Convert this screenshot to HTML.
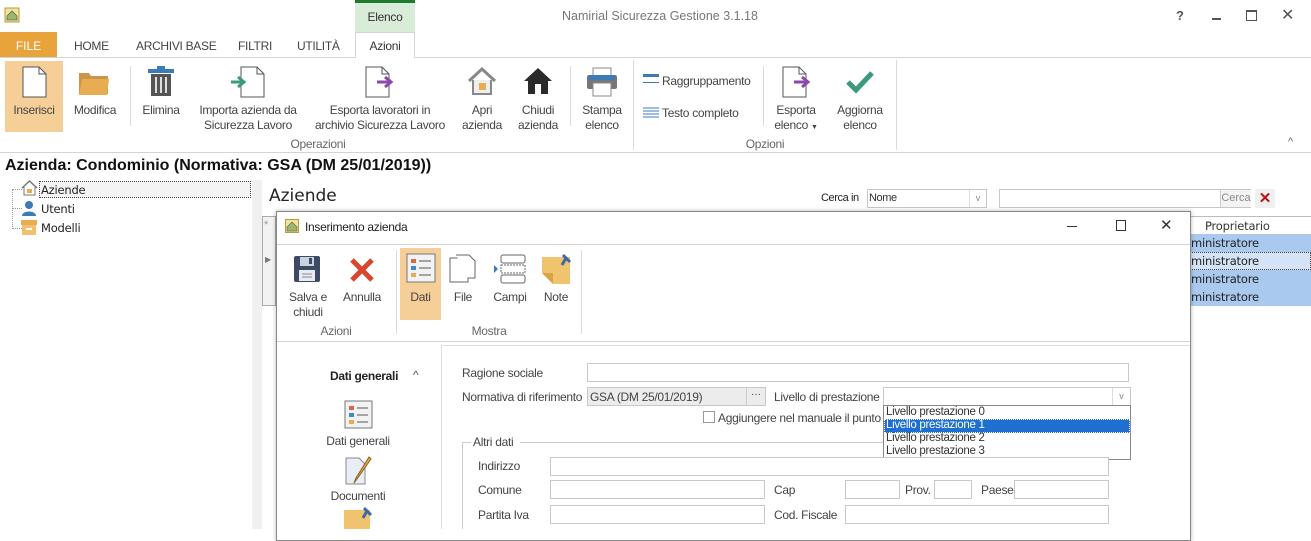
<!DOCTYPE html>
<html><head><meta charset="utf-8">
<style>
*{margin:0;padding:0;box-sizing:border-box}
body{width:1311px;height:529px;overflow:hidden;background:#fff;position:relative;font-family:"Liberation Sans",sans-serif;font-size:12px;color:#333}
.a{position:absolute;white-space:nowrap}
.c{text-align:center}
.n{font-size:12px;letter-spacing:-0.3px;color:#444}
.v{font-family:"DejaVu Sans",sans-serif;font-size:11.5px;color:#222;letter-spacing:-0.2px}
.inp{position:absolute;border:1px solid #c8c8c8;background:#fff}
.sep{position:absolute;width:1px;background:#dadada}
</style></head><body>

<!-- title bar -->
<svg class="a" style="left:4px;top:7px" width="16" height="16"><rect x="1" y="1" width="14" height="14" fill="#f3e49a" stroke="#b89a3a"/><path d="M3 9 L8 4 L13 9 V13 H3Z" fill="#9ab86a" stroke="#666" stroke-width=".8"/></svg>
<div class="a" style="left:355px;top:0;width:60px;height:32px;background:#d8ecd8;border-top:3px solid #1e7a2e"></div>
<div class="a c n" style="left:355px;top:10px;width:60px;color:#333">Elenco</div>
<div class="a c" style="left:540px;top:9px;width:240px;color:#777;font-size:12.5px">Namirial Sicurezza Gestione 3.1.18</div>
<div class="a" style="left:1176px;top:8px;font-size:13px;color:#555;font-weight:bold">?</div>
<div class="a" style="left:1212px;top:18px;width:9px;height:2px;background:#555"></div>
<div class="a" style="left:1246px;top:10px;width:11px;height:11px;border:1px solid #555;border-top-width:2px"></div>
<div class="a" style="left:1281px;top:5px;font-size:16px;color:#555">✕</div>

<!-- tabs -->
<div class="a" style="left:0;top:32px;width:57px;height:25px;background:#e9a33b"></div>
<div class="a c" style="left:0;top:39px;width:57px;color:#fff;font-size:12px">FILE</div>
<div class="a n" style="left:74px;top:39px">HOME</div>
<div class="a n" style="left:136px;top:39px">ARCHIVI BASE</div>
<div class="a n" style="left:238px;top:39px">FILTRI</div>
<div class="a n" style="left:297px;top:39px">UTILITÀ</div>
<div class="a" style="left:0;top:57px;width:1311px;height:1px;background:#d4d4d4"></div>
<div class="a" style="left:355px;top:32px;width:60px;height:26px;background:#fff;border:1px solid #d4d4d4;border-bottom:none"></div>
<div class="a c n" style="left:355px;top:39px;width:60px;color:#333">Azioni</div>

<!-- ribbon -->
<div class="a" style="left:5px;top:61px;width:58px;height:71px;background:#f6cf98"></div>
<svg class="a" style="left:22px;top:66px" width="26" height="32"><path d="M1 1H17L24 8V31H1Z" fill="#fff" stroke="#555"/><path d="M17 1V8H24" fill="none" stroke="#555"/></svg>
<div class="a c n" style="left:5px;top:103px;width:58px">Inserisci</div>
<svg class="a" style="left:78px;top:70px" width="32" height="26"><path d="M1 3H11L13 6H30V24H1Z" fill="#c9964a"/><path d="M4 9H31L29 25H1Z" fill="#e8ac52"/></svg>
<div class="a c n" style="left:66px;top:103px;width:58px">Modifica</div>
<div class="sep" style="left:130px;top:66px;height:60px"></div>
<svg class="a" style="left:147px;top:65px" width="28" height="32"><rect x="1" y="4" width="26" height="4" fill="#3c7ab8"/><rect x="10" y="1" width="8" height="4" fill="#3c7ab8"/><rect x="4" y="9" width="20" height="22" fill="#555"/><path d="M9 12V28M14 12V28M19 12V28" stroke="#ddd" stroke-width="2"/></svg>
<div class="a c n" style="left:135px;top:103px;width:52px">Elimina</div>
<svg class="a" style="left:229px;top:66px" width="36" height="32"><path d="M12 1H28L35 8V31H12Z" fill="#fff" stroke="#555"/><path d="M28 1V8H35" fill="none" stroke="#555"/><path d="M2 16H13M9 11L15 16L9 21" stroke="#3a9a7a" stroke-width="3" fill="none"/></svg>
<div class="a c n" style="left:190px;top:103px;width:116px;line-height:15px">Importa azienda da<br>Sicurezza Lavoro</div>
<svg class="a" style="left:365px;top:66px" width="36" height="32"><path d="M1 1H17L24 8V31H1Z" fill="#fff" stroke="#555"/><path d="M17 1V8H24" fill="none" stroke="#555"/><path d="M12 16H24M20 11L26 16L20 21" stroke="#8a4aa8" stroke-width="3" fill="none"/></svg>
<div class="a c n" style="left:310px;top:103px;width:140px;line-height:15px">Esporta lavoratori in<br>archivio Sicurezza Lavoro</div>
<svg class="a" style="left:467px;top:67px" width="30" height="28"><path d="M2 14L15 2L28 14" fill="none" stroke="#888" stroke-width="3"/><path d="M6 13V27H24V13" fill="#eee" stroke="#888" stroke-width="2"/><rect x="12" y="16" width="7" height="7" fill="#e8ac52"/></svg>
<div class="a c n" style="left:455px;top:103px;width:54px;line-height:15px">Apri<br>azienda</div>
<svg class="a" style="left:523px;top:67px" width="30" height="28"><path d="M1 14L15 1L29 14H25V27H5V14Z" fill="#2a2a2a"/><rect x="12" y="17" width="6" height="10" fill="#fff"/></svg>
<div class="a c n" style="left:511px;top:103px;width:54px;line-height:15px">Chiudi<br>azienda</div>
<div class="sep" style="left:570px;top:66px;height:60px"></div>
<svg class="a" style="left:586px;top:67px" width="32" height="30"><rect x="7" y="1" width="18" height="8" fill="#fff" stroke="#888"/><rect x="1" y="8" width="30" height="14" rx="2" fill="#777"/><rect x="3" y="8" width="26" height="5" fill="#3c7ab8"/><rect x="7" y="16" width="18" height="13" fill="#fff" stroke="#888"/></svg>
<div class="a c n" style="left:574px;top:103px;width:56px;line-height:15px">Stampa<br>elenco</div>
<div class="sep" style="left:633px;top:60px;height:90px"></div>
<div class="a" style="left:643px;top:74px;width:16px;height:9px;border-top:3px solid #3c7ab8;border-bottom:1px solid #3c7ab8"></div>
<div class="a n" style="left:662px;top:74px">Raggruppamento</div>
<svg class="a" style="left:643px;top:107px" width="16" height="12"><path d="M0 1H16M0 4H16M0 7H16M0 10H16" stroke="#3c7ab8"/></svg>
<div class="a n" style="left:662px;top:106px">Testo completo</div>
<div class="sep" style="left:763px;top:66px;height:60px"></div>
<svg class="a" style="left:782px;top:66px" width="30" height="32"><path d="M1 1H17L24 8V31H1Z" fill="#fff" stroke="#555"/><path d="M17 1V8H24" fill="none" stroke="#555"/><path d="M12 16H24M20 11L26 16L20 21" stroke="#8a4aa8" stroke-width="3" fill="none"/></svg>
<div class="a c n" style="left:768px;top:103px;width:56px;line-height:15px">Esporta<br>elenco <span style="font-size:7px">▼</span></div>
<svg class="a" style="left:846px;top:70px" width="28" height="24"><path d="M2 12L10 20L26 3" fill="none" stroke="#3a9a7a" stroke-width="5"/></svg>
<div class="a c n" style="left:830px;top:103px;width:60px;line-height:15px">Aggiorna<br>elenco</div>
<div class="sep" style="left:896px;top:60px;height:90px"></div>
<div class="a c n" style="left:260px;top:137px;width:116px;color:#666">Operazioni</div>
<div class="a c n" style="left:730px;top:137px;width:70px;color:#666">Opzioni</div>
<div class="a" style="left:1288px;top:136px;font-size:11px;color:#666">^</div>
<div class="a" style="left:0;top:152px;width:1311px;height:1px;background:#d4d4d4"></div>

<!-- heading -->
<div class="a" style="left:5px;top:157px;font-family:'Liberation Sans',sans-serif;font-weight:bold;font-size:16px;color:#111">Azienda: Condominio (Normativa: GSA (DM 25/01/2019))</div>

<!-- tree -->
<div class="a" style="left:12px;top:189px;width:1px;height:40px;border-left:1px dotted #999"></div>
<div class="a" style="left:12px;top:189px;width:10px;border-top:1px dotted #999"></div>
<div class="a" style="left:12px;top:208px;width:10px;border-top:1px dotted #999"></div>
<div class="a" style="left:12px;top:228px;width:10px;border-top:1px dotted #999"></div>
<svg class="a" style="left:21px;top:180px" width="17" height="16"><path d="M1 8L8.5 1L16 8" fill="none" stroke="#777" stroke-width="1.5"/><path d="M3 7V15H14V7" fill="#fff" stroke="#777"/><rect x="6" y="9" width="5" height="4" fill="#e8ac52"/></svg>
<div class="a v" style="left:39px;top:181px;width:212px;height:17px;border:1px dotted #444;padding:1px 1px;background:#f4f4f4">Aziende</div>
<svg class="a" style="left:21px;top:200px" width="16" height="16"><circle cx="8" cy="5" r="4" fill="#3c7ab8"/><path d="M1 16C1 10 15 10 15 16Z" fill="#3c7ab8"/></svg>
<div class="a v" style="left:41px;top:202px">Utenti</div>
<svg class="a" style="left:21px;top:219px" width="16" height="16"><rect x="0" y="1" width="16" height="5" fill="#e8ac52"/><rect x="1" y="6" width="14" height="10" fill="#f1c070"/><rect x="5" y="9" width="6" height="2" fill="#fff"/></svg>
<div class="a v" style="left:41px;top:221px">Modelli</div>

<!-- splitter & right pane -->
<div class="a" style="left:252px;top:180px;width:10px;height:349px;background:#f0f0f0"></div>
<div class="a" style="left:269px;top:186px;font-family:'DejaVu Sans',sans-serif;font-size:17px;color:#222">Aziende</div>
<div class="a" style="left:821px;top:192px;font-size:11px;color:#222;letter-spacing:-0.4px">Cerca in</div>
<div class="inp" style="left:867px;top:189px;width:120px;height:19px"></div>
<div class="a" style="left:869px;top:192px;font-size:11px;letter-spacing:-0.4px">Nome</div>
<div class="a" style="left:969px;top:190px;width:17px;height:17px;border-left:1px solid #ddd;font-size:9px;color:#888;text-align:center;line-height:17px">v</div>
<div class="inp" style="left:999px;top:189px;width:252px;height:19px"></div>
<div class="a" style="left:1220px;top:190px;width:31px;height:17px;border-left:1px solid #ccc;background:#f4f4f4;font-size:11px;color:#888;text-align:center;line-height:17px">Cerca</div>
<div class="a" style="left:1255px;top:189px;width:20px;height:19px;background:#f0f0f0;color:#b01818;font-weight:bold;font-size:15px;text-align:center;line-height:19px">✕</div>

<div class="a" style="left:262px;top:216px;width:1049px;height:1px;background:#bbb"></div>
<div class="a" style="left:262px;top:216px;width:14px;height:90px;background:#f2f2f2;border:1px solid #aaa"></div>
<div class="a" style="left:264px;top:219px;color:#999;font-size:11px">*</div>
<div class="a" style="left:265px;top:255px;color:#777;font-size:8px">▶</div>
<div class="a v" style="left:1205px;top:219px;color:#333">Proprietario</div>
<div class="a" style="left:1190px;top:234px;width:121px;height:18px;background:#a9c9ee"></div>
<div class="a" style="left:1190px;top:252px;width:121px;height:18px;background:#d4e4f6;border:1px dotted #444"></div>
<div class="a" style="left:1190px;top:270px;width:121px;height:18px;background:#a9c9ee"></div>
<div class="a" style="left:1190px;top:288px;width:121px;height:18px;background:#a9c9ee"></div>
<div class="a v" style="left:1191px;top:236px">ministratore</div>
<div class="a v" style="left:1191px;top:254px">ministratore</div>
<div class="a v" style="left:1191px;top:272px">ministratore</div>
<div class="a v" style="left:1191px;top:290px">ministratore</div>

<!-- dialog -->
<div class="a" style="left:276px;top:211px;width:915px;height:330px;background:#fff;border:1px solid #888;box-shadow:0 0 4px rgba(0,0,0,.3)"></div>
<svg class="a" style="left:285px;top:219px" width="14" height="14"><rect x="0.5" y="0.5" width="13" height="13" fill="#f3e49a" stroke="#b89a3a"/><path d="M2 8L7 3L12 8V12H2Z" fill="#9ab86a" stroke="#666" stroke-width=".7"/></svg>
<div class="a n" style="left:305px;top:220px;color:#222">Inserimento azienda</div>
<div class="a" style="left:1067px;top:226px;width:10px;height:1px;background:#333"></div>
<div class="a" style="left:1116px;top:220px;width:10px;height:11px;border:1px solid #333"></div>
<div class="a" style="left:1160px;top:216px;font-size:15px;color:#333">✕</div>
<div class="a" style="left:277px;top:244px;width:913px;height:1px;background:#d4d4d4"></div>

<svg class="a" style="left:293px;top:255px" width="28" height="28"><rect x="1" y="1" width="26" height="26" rx="2" fill="#3d4a66"/><rect x="7" y="2" width="14" height="9" fill="#c9d2e0"/><rect x="16" y="3" width="3" height="6" fill="#3d4a66"/><rect x="6" y="15" width="16" height="11" fill="#e8ecf2"/><path d="M9 19H19M9 22H19" stroke="#888"/></svg>
<div class="a c n" style="left:282px;top:290px;width:52px;line-height:15px">Salva e<br>chiudi</div>
<svg class="a" style="left:349px;top:257px" width="26" height="26"><path d="M3 3L23 23M23 3L3 23" stroke="#d8462e" stroke-width="5"/></svg>
<div class="a c n" style="left:336px;top:290px;width:52px">Annulla</div>
<div class="sep" style="left:396px;top:250px;height:84px"></div>
<div class="a" style="left:400px;top:248px;width:41px;height:72px;background:#f6cf98"></div>
<svg class="a" style="left:406px;top:253px" width="30" height="30"><rect x="1" y="1" width="28" height="28" fill="#f2f2f2" stroke="#777"/><rect x="5" y="6" width="5" height="4" fill="#d8664e"/><rect x="5" y="13" width="5" height="4" fill="#3c8ad0"/><rect x="5" y="20" width="5" height="4" fill="#e8ac52"/><path d="M13 8H25M13 15H25M13 22H25" stroke="#555"/></svg>
<div class="a c n" style="left:400px;top:290px;width:41px">Dati</div>
<svg class="a" style="left:449px;top:254px" width="28" height="32"><path d="M1 4H14L19 9V28H1Z" fill="#fff" stroke="#666"/><path d="M7 1H20L26 7V24H19" fill="#fff" stroke="#666"/></svg>
<div class="a c n" style="left:444px;top:290px;width:38px">File</div>
<svg class="a" style="left:492px;top:254px" width="34" height="30"><rect x="9" y="1" width="24" height="8" rx="2" fill="#fff" stroke="#666"/><rect x="9" y="11" width="24" height="8" fill="#fff" stroke="#666" stroke-dasharray="2 1"/><rect x="9" y="21" width="24" height="8" rx="2" fill="#fff" stroke="#666"/><path d="M2 11L6 15L2 19Z" fill="#3c7ab8"/></svg>
<div class="a c n" style="left:488px;top:290px;width:44px">Campi</div>
<svg class="a" style="left:541px;top:253px" width="32" height="32"><path d="M1 4H29V31H12L1 20Z" fill="#f0c36e"/><path d="M1 20H12V31Z" fill="#d8a448"/><path d="M22 2L29 9M25 5L21 12" stroke="#3c6aa8" stroke-width="3"/></svg>
<div class="a c n" style="left:538px;top:290px;width:36px">Note</div>
<div class="sep" style="left:581px;top:250px;height:84px"></div>
<div class="a c n" style="left:296px;top:324px;width:80px;color:#666">Azioni</div>
<div class="a c n" style="left:449px;top:324px;width:80px;color:#666">Mostra</div>
<div class="a" style="left:277px;top:341px;width:913px;height:1px;background:#d4d4d4"></div>
<div class="a" style="left:441px;top:345px;width:749px;height:184px;border-left:1px solid #ddd;border-top:1px solid #ddd"></div>

<!-- left nav -->
<div class="a" style="left:330px;top:369px;font-weight:bold;font-size:12px;color:#222;letter-spacing:-0.3px">Dati generali</div>
<div class="a" style="left:413px;top:368px;font-size:12px;color:#555">^</div>
<svg class="a" style="left:344px;top:400px" width="29" height="29"><rect x="1" y="1" width="27" height="27" fill="#f2f2f2" stroke="#777"/><rect x="5" y="6" width="5" height="4" fill="#d8664e"/><rect x="5" y="13" width="5" height="4" fill="#3c8ad0"/><rect x="5" y="20" width="5" height="4" fill="#e8ac52"/><path d="M13 8H24M13 15H24M13 22H24" stroke="#555"/></svg>
<div class="a c n" style="left:318px;top:434px;width:80px">Dati generali</div>
<svg class="a" style="left:345px;top:453px" width="30" height="32"><path d="M1 5H14L20 11V31H1Z" fill="#e8eef6" stroke="#888"/><path d="M26 6L12 26L9 30L11 25L24 4Z" fill="#e8ac52" stroke="#8a5a20"/></svg>
<div class="a c n" style="left:318px;top:489px;width:80px">Documenti</div>
<svg class="a" style="left:344px;top:506px" width="30" height="23"><path d="M0 4H26V23H0Z" fill="#f0c36e"/><path d="M20 2L27 9M23 5L19 12" stroke="#3c6aa8" stroke-width="3"/></svg>

<!-- form -->
<div class="a n" style="left:462px;top:366px">Ragione sociale</div>
<div class="inp" style="left:587px;top:363px;width:542px;height:19px"></div>
<div class="a n" style="left:462px;top:390px">Normativa di riferimento</div>
<div class="a" style="left:587px;top:387px;width:179px;height:19px;background:#ececec;border:1px solid #c8c8c8"></div>
<div class="a n" style="left:590px;top:390px">GSA (DM 25/01/2019)</div>
<div class="a" style="left:746px;top:388px;width:19px;height:17px;border-left:1px solid #ccc;text-align:center;font-size:10px;line-height:13px">···</div>
<div class="a n" style="left:774px;top:390px">Livello di prestazione</div>
<div class="inp" style="left:883px;top:387px;width:248px;height:19px"></div>
<div class="a" style="left:1112px;top:388px;width:18px;height:17px;border-left:1px solid #ddd;font-size:9px;color:#888;text-align:center;line-height:17px">v</div>
<div class="a" style="left:703px;top:411px;width:12px;height:12px;border:1px solid #999;background:#fff"></div>
<div class="a n" style="left:718px;top:411px">Aggiungere nel manuale il punto de</div>
<div class="a" style="left:883px;top:405px;width:248px;height:55px;background:#fff;border:1px solid #888"></div>
<div class="a" style="left:884px;top:419px;width:246px;height:14px;background:#1e6fd0;border:1px dotted #fff"></div>
<div class="a n" style="left:886px;top:406px;line-height:13px;font-size:11.5px;color:#333">Livello prestazione 0<br><span style="color:#fff">Livello prestazione 1</span><br>Livello prestazione 2<br>Livello prestazione 3</div>

<div class="a" style="left:462px;top:442px;width:1px;height:87px;background:#ccc"></div>
<div class="a" style="left:462px;top:442px;width:9px;height:1px;background:#ccc"></div>
<div class="a" style="left:520px;top:442px;width:363px;height:1px;background:#ccc"></div>
<div class="a n" style="left:473px;top:435px">Altri dati</div>
<div class="a n" style="left:478px;top:459px">Indirizzo</div>
<div class="inp" style="left:550px;top:457px;width:559px;height:19px"></div>
<div class="a n" style="left:478px;top:483px">Comune</div>
<div class="inp" style="left:550px;top:480px;width:215px;height:19px"></div>
<div class="a n" style="left:774px;top:483px">Cap</div>
<div class="inp" style="left:845px;top:480px;width:55px;height:19px"></div>
<div class="a n" style="left:905px;top:483px">Prov.</div>
<div class="inp" style="left:934px;top:480px;width:38px;height:19px"></div>
<div class="a n" style="left:981px;top:483px">Paese</div>
<div class="inp" style="left:1014px;top:480px;width:95px;height:19px"></div>
<div class="a n" style="left:478px;top:508px">Partita Iva</div>
<div class="inp" style="left:550px;top:505px;width:215px;height:19px"></div>
<div class="a n" style="left:774px;top:508px">Cod. Fiscale</div>
<div class="inp" style="left:845px;top:505px;width:264px;height:19px"></div>
</body></html>
